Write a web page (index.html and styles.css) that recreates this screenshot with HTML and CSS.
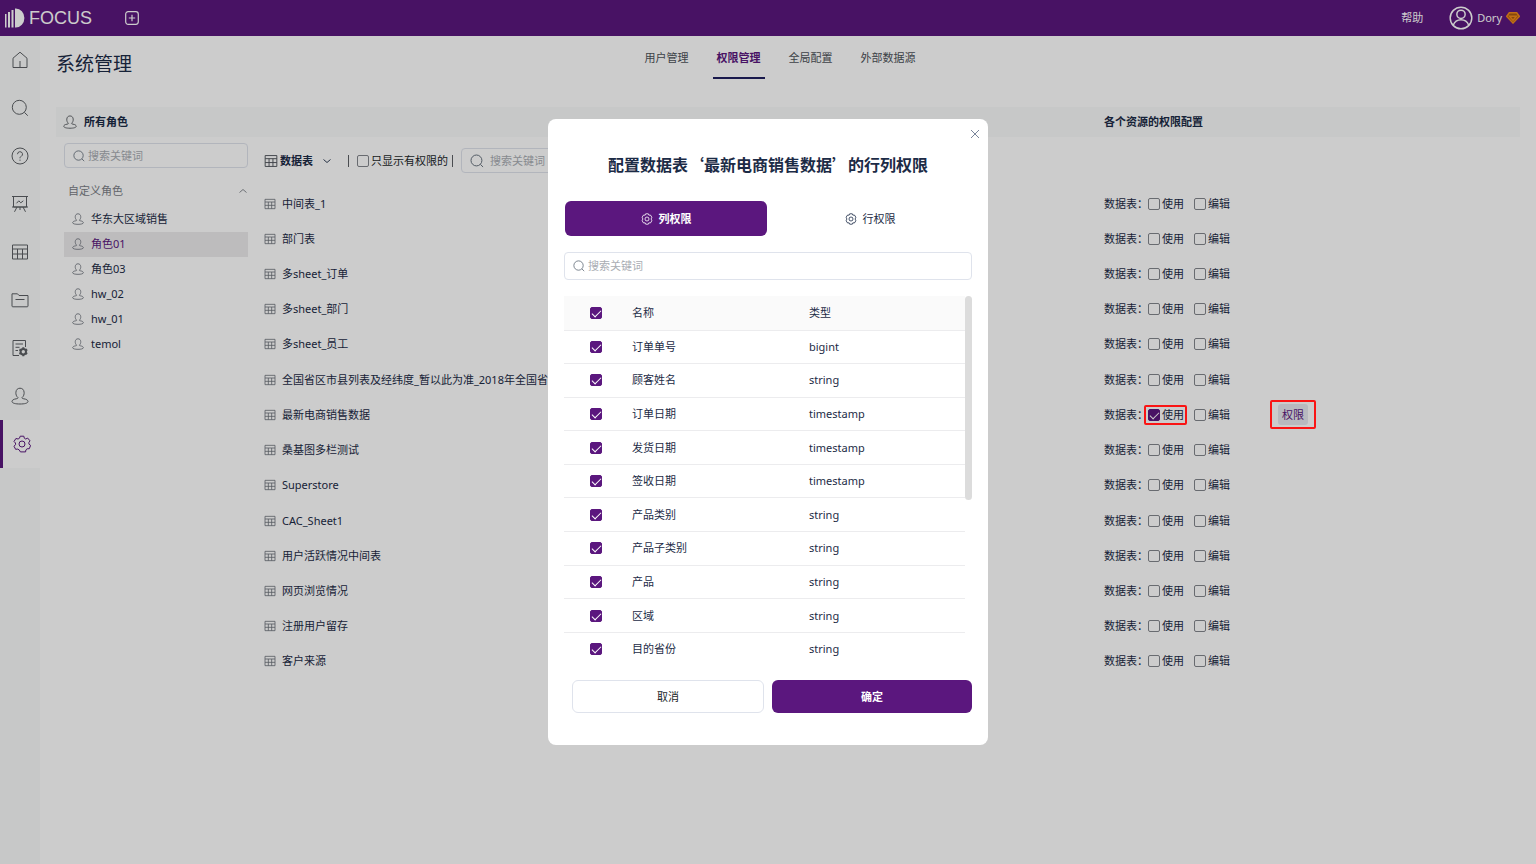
FILE: index.html
```html
<!DOCTYPE html>
<html lang="zh-CN">
<head>
<meta charset="utf-8">
<title>系统管理</title>
<link rel="stylesheet" href="styles.css">
</head>
<body>
<svg class="sprite" aria-hidden="true">
  <symbol id="i-home" viewBox="0 0 18 18"><path d="M2 7.2 9 1.2l7 6v9.3H2zM9 10v6.5"/></symbol>
  <symbol id="i-search" viewBox="0 0 18 18"><circle cx="8.3" cy="8.3" r="7"/><path d="m13.4 13.4 3.4 3.3"/></symbol>
  <symbol id="i-help" viewBox="0 0 18 18"><circle cx="9" cy="9" r="8"/><path d="M6.5 7.2a2.5 2.5 0 1 1 3.7 2.2C9.3 9.900 9 10.300 9 11.300M9 12.600v1.200"/></symbol>
  <symbol id="i-board" viewBox="0 0 18 18"><path d="M1 1.500h16M2.500 1.500v10.500h13V1.500M1 12h16M6 12l-2.500 4.800M12 12l2.500 4.800M9 12v3M5.500 8.300l2.300-2.500 2 2 2.500-2"/></symbol>
  <symbol id="i-table" viewBox="0 0 18 18"><path d="M1.500 2h15v14h-15zM1.500 6h15M1.500 11h15M6.500 6v10M11.500 6v10"/></symbol>
  <symbol id="i-folder" viewBox="0 0 18 18"><path d="M1 15V2.800h5.500L8 4.500h9V15q0 .8-.8.8H1.800Q1 15.800 1 15zM4.500 8.500h9"/></symbol>
  <symbol id="i-docgear" viewBox="0 0 18 18"><path d="M8 16.500H2V1.500h12.500V8M4.500 5h7.500M4.500 8.300h4M4.500 11.500h2.500"/><circle cx="12.300" cy="12.700" r="2.700" stroke-width="2"/><path stroke-width="2" d="M12.300 8.200v1.500M12.300 15.700v1.500M8.400 10.500l1.300.7M14.900 14.200l1.300.7M8.400 14.900l1.300-.7M14.900 11.200l1.300-.7"/></symbol>
  <symbol id="i-user" viewBox="0 0 18 18"><path d="M7 10.600C5.300 9.300 4.700 7.300 4.900 5.200 5.100 2.800 6.600 1.200 9 1.200s3.900 1.600 4.100 4c.2 2.100-.4 4.100-2.100 5.400M7 10.600c0 .8-.6 1-1.800 1.200C2.500 12.200 1 13.200 1 14.500 1 16.200 4.500 17 9 17s8-.8 8-2.500c0-1.300-1.500-2.300-4.200-2.700-1.200-.2-1.800-.4-1.800-1.200"/></symbol>
  <symbol id="i-gear" viewBox="0 0 18 18"><circle cx="9" cy="9" r="3"/><path d="M7.200 1.200h3.600l.5 2 1.400.8 2-.9 2.300 2.700-1.200 1.900.2 1.500 1.600 1.200-1.300 3.300-2.200.1-1.200 1.100-.3 2H7.400l-1.100-1.900-1.500-.9-2.200.2L1 11.200l1.500-1.500V8L1 6.500l1.900-3 2.200.5 1.400-.8z"/></symbol>
  <symbol id="i-hexgear" viewBox="0 0 18 18"><circle cx="9" cy="9" r="3"/><path d="M7 1.200h4l.8 2.100 2.300-.3 2.200 3.300L15.200 9l1.100 2.700-2.200 3.300-2.300-.3-.8 2.100H7l-.8-2.100-2.300.3-2.200-3.300L2.800 9 1.700 6.300 3.900 3l2.300.3z"/></symbol>
  <symbol id="i-up" viewBox="0 0 10 10"><path d="m1.500 6.500 3.500-3 3.500 3"/></symbol>
  <symbol id="i-down" viewBox="0 0 10 10"><path d="m1.500 3.500 3.500 3 3.500-3"/></symbol>
  <symbol id="i-close" viewBox="0 0 10 10"><path d="m1 1 8 8M9 1 1 9"/></symbol>
</svg>

<header class="topbar">
  <a class="logo" href="#">
    <svg class="logo-mark" viewBox="0 0 20 20" aria-hidden="true"><path d="M0 6h1.500v13.500H0zM3 4h2v15.500H3zM6.500 2h2v17.500h-2zM10 .5h.8a8.600 9.500 0 0 1 0 19H10z"/></svg>
    <span>FOCUS</span>
  </a>
  <button class="icon-button add" aria-label="新建"><svg class="icon icon-md" viewBox="0 0 14 14"><rect x=".7" y=".7" width="12.600" height="12.600" rx="2.500"/><path d="M7 3.800v6.400M3.800 7h6.400"/></svg></button>
  <a class="help" href="#">帮助</a>
  <button class="account">
    <svg class="icon avatar" viewBox="0 0 26 26"><circle cx="13" cy="13" r="11.700"/><circle cx="13" cy="9" r="4.500"/><path d="M4.500 21c1.500-4 4.500-6 8.500-6s7 2 8.500 6"/></svg>
    <span>Dory</span>
    <svg class="gem" viewBox="0 0 14 12"><path d="M3.300.8h7.400l2.600 3.600L7 11 .7 4.400z"/><path d="M3.500 4.200h7L7 8.300z"/></svg>
  </button>
</header>

<div class="shell">
  <nav class="sidebar" aria-label="主导航">
    <a href="#" aria-label="首页"><svg class="icon icon-lg"><use href="#i-home"/></svg></a>
    <a href="#" aria-label="搜索"><svg class="icon icon-lg"><use href="#i-search"/></svg></a>
    <a href="#" aria-label="问答"><svg class="icon icon-lg"><use href="#i-help"/></svg></a>
    <a href="#" aria-label="看板"><svg class="icon icon-lg"><use href="#i-board"/></svg></a>
    <a href="#" aria-label="数据表"><svg class="icon icon-lg"><use href="#i-table"/></svg></a>
    <a href="#" aria-label="资源"><svg class="icon icon-lg"><use href="#i-folder"/></svg></a>
    <a href="#" aria-label="任务"><svg class="icon icon-lg"><use href="#i-docgear"/></svg></a>
    <a href="#" aria-label="用户"><svg class="icon icon-lg"><use href="#i-user"/></svg></a>
    <a href="#" class="active" aria-label="系统管理"><svg class="icon icon-lg"><use href="#i-gear"/></svg></a>
  </nav>

  <main class="main">
    <div class="page-head">
      <h1>系统管理</h1>
      <nav class="tabs">
        <a href="#">用户管理</a>
        <a href="#" class="active">权限管理</a>
        <a href="#">全局配置</a>
        <a href="#">外部数据源</a>
      </nav>
    </div>

    <div class="columns band">
      <h2 class="band-roles"><svg class="icon icon-md"><use href="#i-user"/></svg>所有角色</h2>
      <span></span>
      <h2>各个资源的权限配置</h2>
    </div>

    <div class="columns">
      <aside class="roles">
        <label class="search"><svg class="icon icon-sm"><use href="#i-search"/></svg><input type="text" placeholder="搜索关键词" aria-label="搜索角色"></label>
        <button class="group">自定义角色<svg class="icon icon-xs"><use href="#i-up"/></svg></button>
        <ul class="role-list">
          <li><a href="#"><svg class="icon icon-sm"><use href="#i-user"/></svg>华东大区域销售</a></li>
          <li><a href="#" class="active"><svg class="icon icon-sm"><use href="#i-user"/></svg>角色01</a></li>
          <li><a href="#"><svg class="icon icon-sm"><use href="#i-user"/></svg>角色03</a></li>
          <li><a href="#"><svg class="icon icon-sm"><use href="#i-user"/></svg>hw_02</a></li>
          <li><a href="#"><svg class="icon icon-sm"><use href="#i-user"/></svg>hw_01</a></li>
          <li><a href="#"><svg class="icon icon-sm"><use href="#i-user"/></svg>temol</a></li>
        </ul>
      </aside>

      <section class="resources">
        <div class="toolbar">
          <label class="kind"><svg class="icon icon-md"><use href="#i-table"/></svg><select aria-label="资源类型"><option>数据表</option></select><svg class="icon icon-xs"><use href="#i-down"/></svg></label>
          <span class="divider"></span>
          <label class="check"><input type="checkbox">只显示有权限的</label>
          <span class="divider"></span>
          <label class="search search-wide"><svg class="icon icon-md"><use href="#i-search"/></svg><input type="text" placeholder="搜索关键词" aria-label="搜索数据表"></label>
        </div>
        <ul class="resource-list">
          <li><span class="name"><svg class="icon icon-sm"><use href="#i-table"/></svg>中间表_1</span><span class="grants">数据表：<label class="check"><input type="checkbox">使用</label><label class="check"><input type="checkbox">编辑</label></span></li>
          <li><span class="name"><svg class="icon icon-sm"><use href="#i-table"/></svg>部门表</span><span class="grants">数据表：<label class="check"><input type="checkbox">使用</label><label class="check"><input type="checkbox">编辑</label></span></li>
          <li><span class="name"><svg class="icon icon-sm"><use href="#i-table"/></svg>多sheet_订单</span><span class="grants">数据表：<label class="check"><input type="checkbox">使用</label><label class="check"><input type="checkbox">编辑</label></span></li>
          <li><span class="name"><svg class="icon icon-sm"><use href="#i-table"/></svg>多sheet_部门</span><span class="grants">数据表：<label class="check"><input type="checkbox">使用</label><label class="check"><input type="checkbox">编辑</label></span></li>
          <li><span class="name"><svg class="icon icon-sm"><use href="#i-table"/></svg>多sheet_员工</span><span class="grants">数据表：<label class="check"><input type="checkbox">使用</label><label class="check"><input type="checkbox">编辑</label></span></li>
          <li><span class="name"><svg class="icon icon-sm"><use href="#i-table"/></svg>全国省区市县列表及经纬度_暂以此为准_2018年全国省</span><span class="grants">数据表：<label class="check"><input type="checkbox">使用</label><label class="check"><input type="checkbox">编辑</label></span></li>
          <li><span class="name"><svg class="icon icon-sm"><use href="#i-table"/></svg>最新电商销售数据</span><span class="grants">数据表：<label class="check marked"><input type="checkbox" checked>使用</label><label class="check"><input type="checkbox">编辑</label><span class="marked marked-wide"><button class="grant-button">权限</button></span></span></li>
          <li><span class="name"><svg class="icon icon-sm"><use href="#i-table"/></svg>桑基图多栏测试</span><span class="grants">数据表：<label class="check"><input type="checkbox">使用</label><label class="check"><input type="checkbox">编辑</label></span></li>
          <li><span class="name"><svg class="icon icon-sm"><use href="#i-table"/></svg>Superstore</span><span class="grants">数据表：<label class="check"><input type="checkbox">使用</label><label class="check"><input type="checkbox">编辑</label></span></li>
          <li><span class="name"><svg class="icon icon-sm"><use href="#i-table"/></svg>CAC_Sheet1</span><span class="grants">数据表：<label class="check"><input type="checkbox">使用</label><label class="check"><input type="checkbox">编辑</label></span></li>
          <li><span class="name"><svg class="icon icon-sm"><use href="#i-table"/></svg>用户活跃情况中间表</span><span class="grants">数据表：<label class="check"><input type="checkbox">使用</label><label class="check"><input type="checkbox">编辑</label></span></li>
          <li><span class="name"><svg class="icon icon-sm"><use href="#i-table"/></svg>网页浏览情况</span><span class="grants">数据表：<label class="check"><input type="checkbox">使用</label><label class="check"><input type="checkbox">编辑</label></span></li>
          <li><span class="name"><svg class="icon icon-sm"><use href="#i-table"/></svg>注册用户留存</span><span class="grants">数据表：<label class="check"><input type="checkbox">使用</label><label class="check"><input type="checkbox">编辑</label></span></li>
          <li><span class="name"><svg class="icon icon-sm"><use href="#i-table"/></svg>客户来源</span><span class="grants">数据表：<label class="check"><input type="checkbox">使用</label><label class="check"><input type="checkbox">编辑</label></span></li>
        </ul>
      </section>
    </div>
  </main>
</div>

<div class="backdrop">
  <div class="dialog" role="dialog" aria-modal="true" aria-labelledby="dialog-title">
    <button class="icon-button close" aria-label="关闭"><svg class="icon icon-xs"><use href="#i-close"/></svg></button>
    <h2 id="dialog-title">配置数据表‘最新电商销售数据’的行列权限</h2>
    <div class="modes">
      <button class="active"><svg class="icon icon-sm"><use href="#i-hexgear"/></svg>列权限</button>
      <button><svg class="icon icon-sm"><use href="#i-hexgear"/></svg>行权限</button>
    </div>
    <label class="search search-dialog"><svg class="icon icon-sm"><use href="#i-search"/></svg><input type="text" placeholder="搜索关键词" aria-label="搜索列"></label>
    <div class="scroll">
      <table>
        <thead><tr><th class="pick"><input type="checkbox" checked aria-label="全选"></th><th>名称</th><th class="type">类型</th></tr></thead>
        <tbody>
          <tr><td class="pick"><input type="checkbox" checked aria-label="订单单号"></td><td>订单单号</td><td>bigint</td></tr>
          <tr><td class="pick"><input type="checkbox" checked aria-label="顾客姓名"></td><td>顾客姓名</td><td>string</td></tr>
          <tr><td class="pick"><input type="checkbox" checked aria-label="订单日期"></td><td>订单日期</td><td>timestamp</td></tr>
          <tr><td class="pick"><input type="checkbox" checked aria-label="发货日期"></td><td>发货日期</td><td>timestamp</td></tr>
          <tr><td class="pick"><input type="checkbox" checked aria-label="签收日期"></td><td>签收日期</td><td>timestamp</td></tr>
          <tr><td class="pick"><input type="checkbox" checked aria-label="产品类别"></td><td>产品类别</td><td>string</td></tr>
          <tr><td class="pick"><input type="checkbox" checked aria-label="产品子类别"></td><td>产品子类别</td><td>string</td></tr>
          <tr><td class="pick"><input type="checkbox" checked aria-label="产品"></td><td>产品</td><td>string</td></tr>
          <tr><td class="pick"><input type="checkbox" checked aria-label="区域"></td><td>区域</td><td>string</td></tr>
          <tr><td class="pick"><input type="checkbox" checked aria-label="目的省份"></td><td>目的省份</td><td>string</td></tr>
        </tbody>
      </table>
      <div class="scrollbar"><div class="thumb"></div></div>
    </div>
    <div class="actions">
      <button class="cancel">取消</button>
      <button class="confirm">确定</button>
    </div>
  </div>
</div>
</body>
</html>
```
FILE: styles.css
```css
:root {
  --purple: #5b177e;
  --ink: #1c2b46;
  --tint: #f9fbfb;
  --line: #dfe3ec;
  --role-column: 208px;
  --grant-column: 416px;
}

* { box-sizing: border-box; }

body {
  margin: 0;
  min-height: 100vh;
  display: flex;
  flex-direction: column;
  background: #fff;
  color: var(--ink);
  font: 11px/16px "Noto Sans", "Noto Sans CJK SC", sans-serif;
}

button, input, select { font: inherit; color: inherit; }
button { border: 0; padding: 0; background: none; cursor: pointer; }
a { color: inherit; text-decoration: none; }
ul { list-style: none; margin: 0; padding: 0; }
h1, h2 { margin: 0; font-size: inherit; }

.sprite { position: absolute; width: 0; height: 0; }
.icon {
  display: block;
  flex: none;
  fill: none;
  stroke: currentColor;
  stroke-width: 1.2;
}
.icon-lg { width: 18px; height: 18px; color: #5d6064; stroke-width: 1; }
.icon-md { width: 14px; height: 14px; }
.icon-sm { width: 12px; height: 12px; }
.icon-xs { width: 10px; height: 10px; stroke-width: .9; }

/* Top bar */
.topbar {
  display: flex;
  align-items: center;
  height: 36px;
  padding: 0 16px 0 5px;
  background: var(--purple);
  color: #fff;
}
.logo {
  display: flex;
  align-items: center;
  gap: 4px;
  font: 18px/20px "Liberation Sans", Arial, sans-serif;
}
.logo-mark { width: 20px; height: 20px; fill: currentColor; }
.add { margin-left: 33px; }
.help { margin-left: auto; }
.account { display: flex; align-items: center; gap: 4px; margin-left: 26px; }
.avatar { width: 24px; height: 24px; stroke-width: 1.6; }
.gem { width: 14px; height: 12px; fill: #a85a10; stroke: #f08a1c; stroke-width: 1.5; }

/* Shell */
.shell { display: flex; flex: 1; }
.sidebar { flex: none; width: 40px; background: var(--tint); }
.sidebar a { display: grid; place-items: center; height: 48px; }
.sidebar .active {
  border-left: 3px solid var(--purple);
  background: #fff;
}
.sidebar .active .icon { color: var(--purple); }
.main { flex: 1; min-width: 0; padding: 0 16px; }

.page-head {
  display: grid;
  grid-template-columns: 1fr auto 1fr;
  height: 71px;
  padding-right: 16px;
}
h1 { padding-top: 14px; font-size: 19px; line-height: 28px; font-weight: 400; }
.tabs { display: flex; align-items: flex-start; gap: 20px; color: #4d5259; }
.tabs a { padding: 14px 4px 11px; border-bottom: 2px solid transparent; }
.tabs .active { border-color: #202060; color: var(--purple); font-weight: 700; }

.columns {
  display: grid;
  grid-template-columns: var(--role-column) 1fr var(--grant-column);
}
.band { align-items: center; height: 30px; background: var(--tint); font-weight: 700; }
.band-roles { display: flex; align-items: center; gap: 7px; padding-left: 7px; }
.band-roles .icon { color: #5d6064; }

/* Search fields */
.search {
  display: flex;
  align-items: center;
  gap: 3px;
  height: 25px;
  padding: 0 8px;
  border: 1px solid var(--line);
  border-radius: 4px;
}
.search .icon { color: #5d6875; }
.search input {
  flex: 1;
  min-width: 0;
  padding: 0;
  border: 0;
  outline: 0;
  background: none;
}
.search input::placeholder { color: #a9adb3; opacity: 1; }
.search-wide { gap: 6px; width: 184px; margin-left: 8px; }
.search-dialog { height: 28px; }

/* Roles */
.roles { padding: 6px 16px 0 8px; }
.group {
  display: flex;
  align-items: center;
  justify-content: space-between;
  width: 100%;
  margin-top: 15px;
  padding-left: 4px;
  color: #7b8087;
}
.role-list { display: grid; grid-auto-rows: 1fr; min-height: 149px; margin-top: 8px; }
.role-list a { display: flex; align-items: center; gap: 7px; height: 100%; padding-left: 8px; }
.role-list .icon, .name .icon { color: #6b7078; }
.role-list .active { background: #edebed; color: var(--purple); }

/* Resources */
.resources { grid-column: 2 / 4; padding-top: 11px; }
.toolbar { display: flex; align-items: center; }
.kind { display: flex; align-items: center; font-weight: 700; }
.kind .icon-md { color: #4d5259; }
.kind select {
  width: 42px;
  margin-left: 2px;
  padding: 0;
  border: 0;
  appearance: none;
  background: none;
}
.divider { width: 1px; height: 12px; margin-left: 16px; background: #5d6064; }
.check { display: flex; align-items: center; gap: 3px; }
.toolbar .check { gap: 2px; margin: 0 -12px 0 8px; color: #1b1f2a; }

input[type="checkbox"] {
  display: grid;
  place-items: center;
  flex: none;
  width: 12px;
  height: 12px;
  margin: 0;
  border: 1px solid #83868c;
  border-radius: 2px;
  appearance: none;
}
input[type="checkbox"]:checked { border-color: var(--purple); background: var(--purple); }
input[type="checkbox"]:checked::before {
  content: "";
  width: 4px;
  height: 8px;
  margin-bottom: 2px;
  border: solid #fff;
  border-width: 0 1px 1px 0;
  transform: rotate(45deg);
}

.resource-list { display: grid; grid-auto-rows: 1fr; min-height: 493px; margin-top: 13px; }
.resource-list li {
  display: grid;
  grid-template-columns: 1fr var(--grant-column);
  align-items: center;
}
.name { display: flex; align-items: center; gap: 6px; }
.grants { display: flex; align-items: center; }
.grants .check { gap: 2px; margin-right: 10px; }
.marked { position: relative; }
.marked::after {
  content: "";
  position: absolute;
  inset: -2px -3px -2px -4px;
  z-index: 2;
  border: 2px solid #fa1414;
  border-radius: 2px;
  pointer-events: none;
}
.marked-wide { margin-left: 38px; }
.marked-wide::after { inset: -4px -8px; }
.grant-button {
  display: block;
  height: 21px;
  padding: 0 4px;
  border-radius: 3px;
  background: #e7e8ef;
  color: var(--purple);
}

/* Dialog */
.backdrop {
  position: fixed;
  inset: 0;
  z-index: 1;
  display: grid;
  place-items: center;
  background: rgba(0, 0, 0, .2);
}
.dialog {
  position: relative;
  width: 440px;
  padding: 33px 16px 32px;
  border-radius: 8px;
  background: #fff;
}
.close { position: absolute; top: 10px; right: 8px; color: #6b7890; }
.dialog h2 {
  font-family: "Noto Sans CJK SC", sans-serif;
  font-size: 16px;
  line-height: 24px;
  text-align: center;
  white-space: nowrap;
}
.modes { display: grid; grid-template-columns: 1fr 1fr; margin: 25px 0 16px; }
.modes button {
  display: flex;
  align-items: center;
  justify-content: center;
  gap: 6px;
  height: 35px;
  margin: 0 1px;
  border-radius: 6px;
}
.modes .active { background: var(--purple); color: #fff; font-weight: 700; }
.scroll { display: flex; margin-top: 16px; }
table { flex: 1; height: 370px; border-collapse: collapse; table-layout: fixed; }
tr { height: 33px; }
thead tr { height: 34px; }
th, td { padding: 0; border-bottom: 1px solid #ececee; text-align: left; font-weight: 400; }
tbody tr:last-child td { border-bottom: 0; }
thead { background: #fafafa; }
.pick { width: 68px; padding-left: 26px; }
.type { width: 156px; }
.scrollbar { width: 7px; }
.thumb { height: 55%; border-radius: 4px; background: #dcdcdc; }
.actions { display: grid; grid-template-columns: 192px 1fr; gap: 8px; align-items: center; margin-top: 14px; padding-left: 8px; }
.actions button { height: 33px; border-radius: 6px; }
.cancel { border: 1px solid var(--line); color: #1b1f2a; }
.confirm { background: var(--purple); color: #fff; font-weight: 700; }
```
